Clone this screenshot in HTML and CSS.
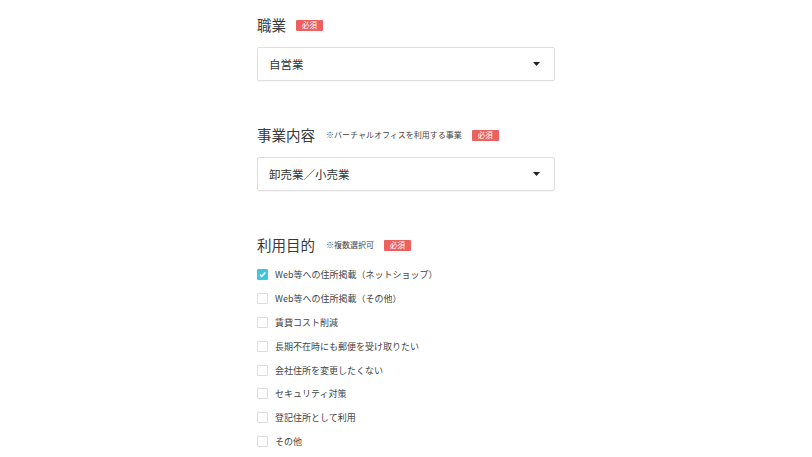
FILE: index.html
```html
<!DOCTYPE html>
<html lang="ja">
<head>
<meta charset="utf-8">
<title>フォーム</title>
<link rel="stylesheet" href="styles.css">
</head>
<body>
<main class="form">
  <section class="field">
    <div class="label-row">
      <h2 class="label">職業</h2>
      <span class="badge">必須</span>
    </div>
    <div class="select">
      <span class="select-value">自営業</span>
      <svg class="arrow" width="7" height="4" viewBox="0 0 7 4"><path d="M0 0H7L3.5 4Z" fill="#222"/></svg>
    </div>
  </section>

  <section class="field">
    <div class="label-row">
      <h2 class="label">事業内容</h2>
      <span class="note">※バーチャルオフィスを利用する事業</span>
      <span class="badge">必須</span>
    </div>
    <div class="select">
      <span class="select-value">卸売業／小売業</span>
      <svg class="arrow" width="7" height="4" viewBox="0 0 7 4"><path d="M0 0H7L3.5 4Z" fill="#222"/></svg>
    </div>
  </section>

  <section class="field last">
    <div class="label-row">
      <h2 class="label">利用目的</h2>
      <span class="note">※複数選択可</span>
      <span class="badge">必須</span>
    </div>
    <ul class="checks">
      <li class="check"><span class="box checked"><svg width="9" height="9" viewBox="0 0 9 9"><path d="M1.8 4.6L3.7 6.4L7.3 2.6" fill="none" stroke="#fff" stroke-width="1.5"/></svg></span>Web等への住所掲載（ネットショップ）</li>
      <li class="check"><span class="box"></span>Web等への住所掲載（その他）</li>
      <li class="check"><span class="box"></span>賃貸コスト削減</li>
      <li class="check"><span class="box"></span>長期不在時にも郵便を受け取りたい</li>
      <li class="check"><span class="box"></span>会社住所を変更したくない</li>
      <li class="check"><span class="box"></span>セキュリティ対策</li>
      <li class="check"><span class="box"></span>登記住所として利用</li>
      <li class="check"><span class="box"></span>その他</li>
    </ul>
  </section>
</main>
</body>
</html>
```

FILE: styles.css
```css
html, body {
  margin: 0;
  padding: 0;
  background: #fff;
}
body {
  font-family: "Noto Sans CJK JP", "Noto Sans", sans-serif;
  color: #333;
}
.form {
  width: 298px;
  margin: 0 auto;
  padding-top: 15px;
}
.field {
  margin-bottom: 44px;
}
.field.last {
  margin-bottom: 0;
}
.label-row {
  display: flex;
  align-items: center;
  height: 20px;
  margin-bottom: 12px;
}
.label {
  margin: 0;
  font-size: 14.5px;
  font-weight: 400;
  line-height: 20px;
  color: #3a3a3a;
}
.note {
  margin-left: 11px;
  font-size: 8px;
  color: #444;
  line-height: 1;
}
.badge {
  margin-left: 10px;
  display: inline-flex;
  align-items: center;
  justify-content: center;
  width: 27px;
  height: 11px;
  background: #ec6060;
  color: #fff;
  font-size: 7.5px;
  line-height: 1;
  border-radius: 1px;
}
.select {
  display: flex;
  align-items: center;
  justify-content: space-between;
  height: 32px;
  padding: 0 14px 0 11px;
  border: 1px solid #dedede;
  border-radius: 2px;
  box-shadow: 0 1px 1px rgba(0,0,0,0.03);
}
.select-value {
  font-size: 11.5px;
  color: #333;
}
.arrow {
  display: block;
}
.checks {
  list-style: none;
  margin: 0;
  padding: 0;
  margin-top: -4.5px;
}
.check {
  display: flex;
  align-items: center;
  height: 23.9px;
  font-size: 9px;
  color: #444;
}
.box {
  box-sizing: border-box;
  width: 11px;
  height: 11px;
  margin-right: 7px;
  border: 1px solid #ddd;
  border-radius: 1px;
  background: #fff;
  display: inline-flex;
  align-items: center;
  justify-content: center;
  flex: none;
}
.box.checked {
  background: #3ec6dc;
  border-color: #3ec6dc;
}
```
